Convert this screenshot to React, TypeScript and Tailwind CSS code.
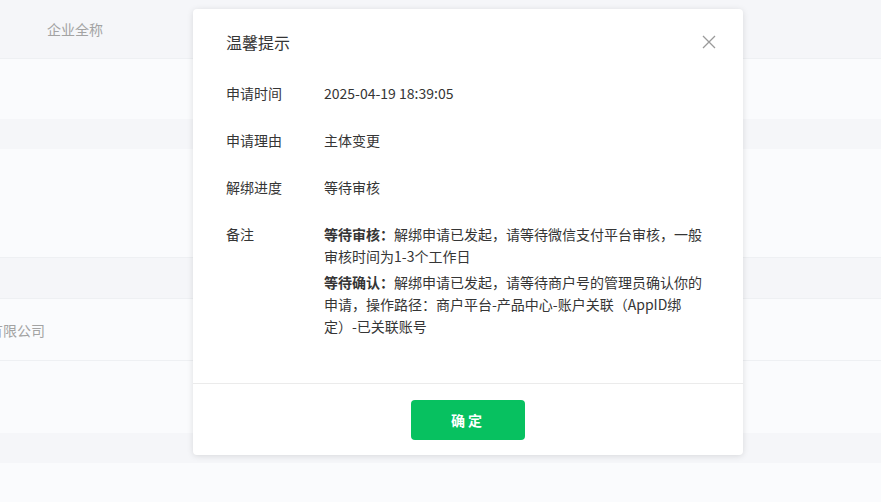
import React from "react";

const font = { fontFamily: '"Noto Sans CJK SC", "Noto Sans", sans-serif' };

function Field({ label, children }: { label: string; children: React.ReactNode }) {
  return (
    <div className="flex text-sm leading-[22px] text-[#353535]">
      <div className="w-[98px] shrink-0">{label}</div>
      <div className="flex-1">{children}</div>
    </div>
  );
}

export default function App() {
  return (
    <div className="relative h-[502px] w-[881px] overflow-hidden bg-[#fafbfd]" style={font}>
      {/* table behind the dialog */}
      <div className="flex flex-col text-sm text-[#a3a3a3]">
        <div className="flex h-[59px] items-center border-b border-[#eef0f3] bg-[#f5f6f9] pl-[47px]">企业全称</div>
        <div className="h-[60px] bg-[#fafbfd]" />
        <div className="h-[30px] bg-[#f5f6f9]" />
        <div className="h-[109px] border-b border-[#eef0f3] bg-[#fafbfd]" />
        <div className="h-[41px] border-b border-[#eef0f3] bg-[#f5f6f9]" />
        <div className="flex h-[62px] items-center border-b border-[#eef0f3] bg-[#fafbfd]">
          <span className="-ml-[11px]">有限公司</span>
        </div>
        <div className="h-[72px] bg-[#fafbfd]" />
        <div className="h-[30px] bg-[#f5f6f9]" />
      </div>

      {/* dialog */}
      <div className="absolute left-[193px] top-[9px] flex h-[446px] w-[550px] flex-col rounded bg-white shadow-[0_1px_6px_rgba(0,0,0,0.12)]">
        <div className="flex items-center justify-between pl-[33px] pr-[27px] pt-[22px]">
          <div className="text-base leading-[22px] text-[#353535]">温馨提示</div>
          <svg width="14" height="14" viewBox="0 0 14 14" className="text-[#9a9a9a]">
            <path d="M1 1L13 13M13 1L1 13" stroke="currentColor" strokeWidth="1.3" fill="none" />
          </svg>
        </div>

        <div className="flex flex-1 flex-col gap-[25px] pl-[33px] pr-[33px] pt-[29px]">
          <Field label="申请时间">2025-04-19 18:39:05</Field>
          <Field label="申请理由">主体变更</Field>
          <Field label="解绑进度">等待审核</Field>
          <Field label="备注">
            <div className="flex flex-col gap-1">
              <p>
                <b className="font-bold">等待审核：</b>解绑申请已发起，请等待微信支付平台审核，一般审核时间为1-3个工作日
              </p>
              <p>
                <b className="font-bold">等待确认：</b>解绑申请已发起，请等待商户号的管理员确认你的申请，操作路径：商户平台-产品中心-账户关联（AppID绑定）-已关联账号
              </p>
            </div>
          </Field>
        </div>

        <div className="flex h-[72px] shrink-0 items-start justify-center border-t border-[#ebebeb] pt-4">
          <button className="h-10 w-[114px] rounded bg-[#07c160] text-sm font-bold tracking-[3px] text-white">
            确定
          </button>
        </div>
      </div>
    </div>
  );
}
